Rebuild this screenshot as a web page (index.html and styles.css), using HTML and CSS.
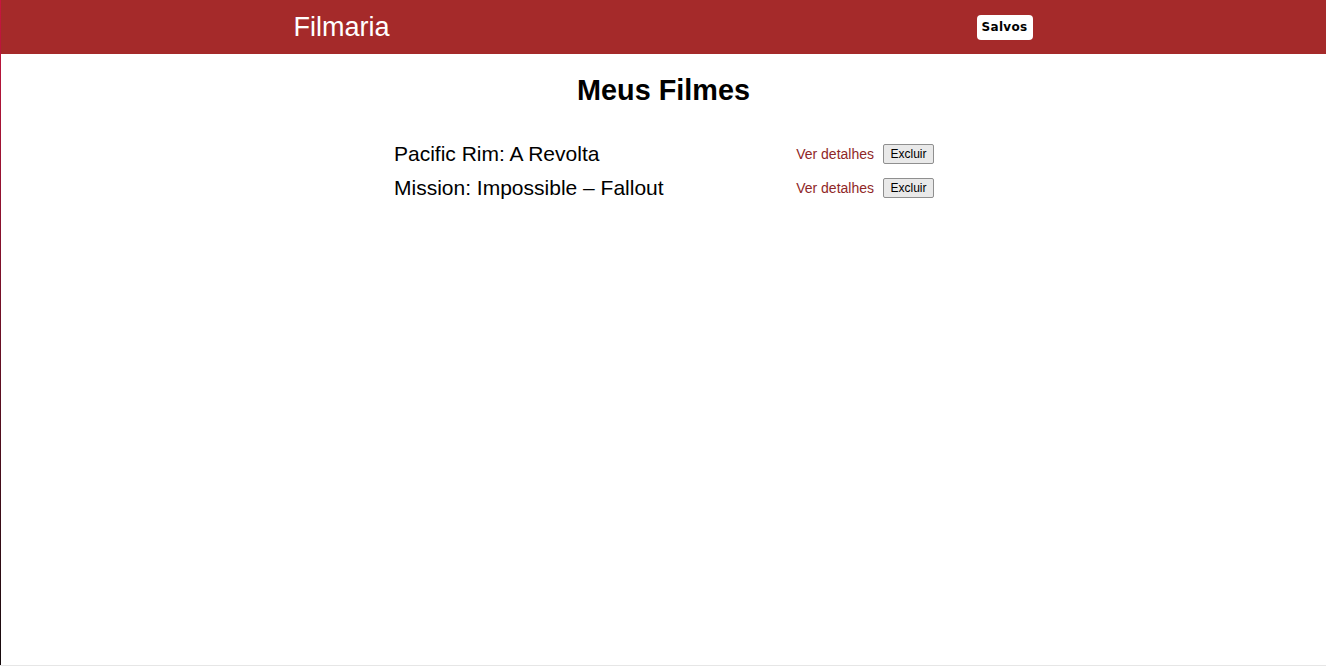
FILE: index.html
```html
<!DOCTYPE html>
<html lang="pt-BR">
<head>
<meta charset="utf-8">
<title>Filmaria</title>
<link rel="stylesheet" href="styles.css">
</head>
<body>
<header class="topbar">
  <div class="topbar-inner">
    <a class="logo" href="#">Filmaria</a>
    <a class="saved-btn" href="#">Salvos</a>
  </div>
</header>
<main class="content">
  <h1 class="page-title">Meus Filmes</h1>
  <ul class="movie-list">
    <li class="movie-row">
      <span class="movie-name">Pacific Rim: A Revolta</span>
      <div class="movie-actions">
        <a class="details-link" href="#">Ver detalhes</a>
        <button class="delete-btn">Excluir</button>
      </div>
    </li>
    <li class="movie-row">
      <span class="movie-name">Mission: Impossible – Fallout</span>
      <div class="movie-actions">
        <a class="details-link" href="#">Ver detalhes</a>
        <button class="delete-btn">Excluir</button>
      </div>
    </li>
  </ul>
</main>
</body>
</html>
```
FILE: styles.css
```css
* { box-sizing: border-box; }
html, body { margin: 0; padding: 0; }
html {
  min-height: 100vh;
  border-bottom: 1px solid #e6e6e6;
}
body {
  font-family: "Liberation Sans", Arial, sans-serif;
  background: #fff;
  color: #000;
  min-height: calc(100vh - 1px);
  border-left: 1px solid;
  border-image: linear-gradient(#c8163f, #5a0e20 60%, #140a0c) 1;
}
.topbar {
  background: #a52a2a;
  height: 54px;
}
.topbar-inner {
  width: 738px;
  margin: 0 auto;
  height: 100%;
  display: flex;
  align-items: center;
  justify-content: space-between;
}
.logo {
  color: #fff;
  text-decoration: none;
  font-size: 27px;
  margin-left: -1px;
  margin-top: 1px;
}
.saved-btn {
  background: #fff;
  color: #000;
  text-decoration: none;
  font-family: "DejaVu Sans", Verdana, sans-serif;
  font-weight: bold;
  font-size: 12px;
  letter-spacing: 0.3px;
  border-radius: 4px;
  height: 25px;
  width: 56px;
  display: flex;
  align-items: center;
  justify-content: center;
}
.content {
  display: flex;
  flex-direction: column;
  align-items: center;
}
.page-title {
  font-size: 28.8px;
  font-weight: bold;
  margin: 20px 0 0;
  line-height: 33px;
}
.movie-list {
  list-style: none;
  margin: 30px 0 0 1px;
  padding: 0;
  width: 540px;
}
.movie-row {
  display: flex;
  justify-content: space-between;
  align-items: center;
  height: 34px;
}
.movie-name {
  font-size: 21px;
}
.movie-actions {
  display: flex;
  align-items: center;
  gap: 9px;
}
.details-link {
  color: #8f2727;
  text-decoration: none;
  font-size: 14px;
}
.delete-btn {
  font-family: "Liberation Sans", Arial, sans-serif;
  font-size: 12px;
  background: #e9e9e9;
  border: 1px solid #8f8f8f;
  border-radius: 2px;
  height: 20px;
  width: 51px;
  padding: 0;
  color: #000;
}
```
